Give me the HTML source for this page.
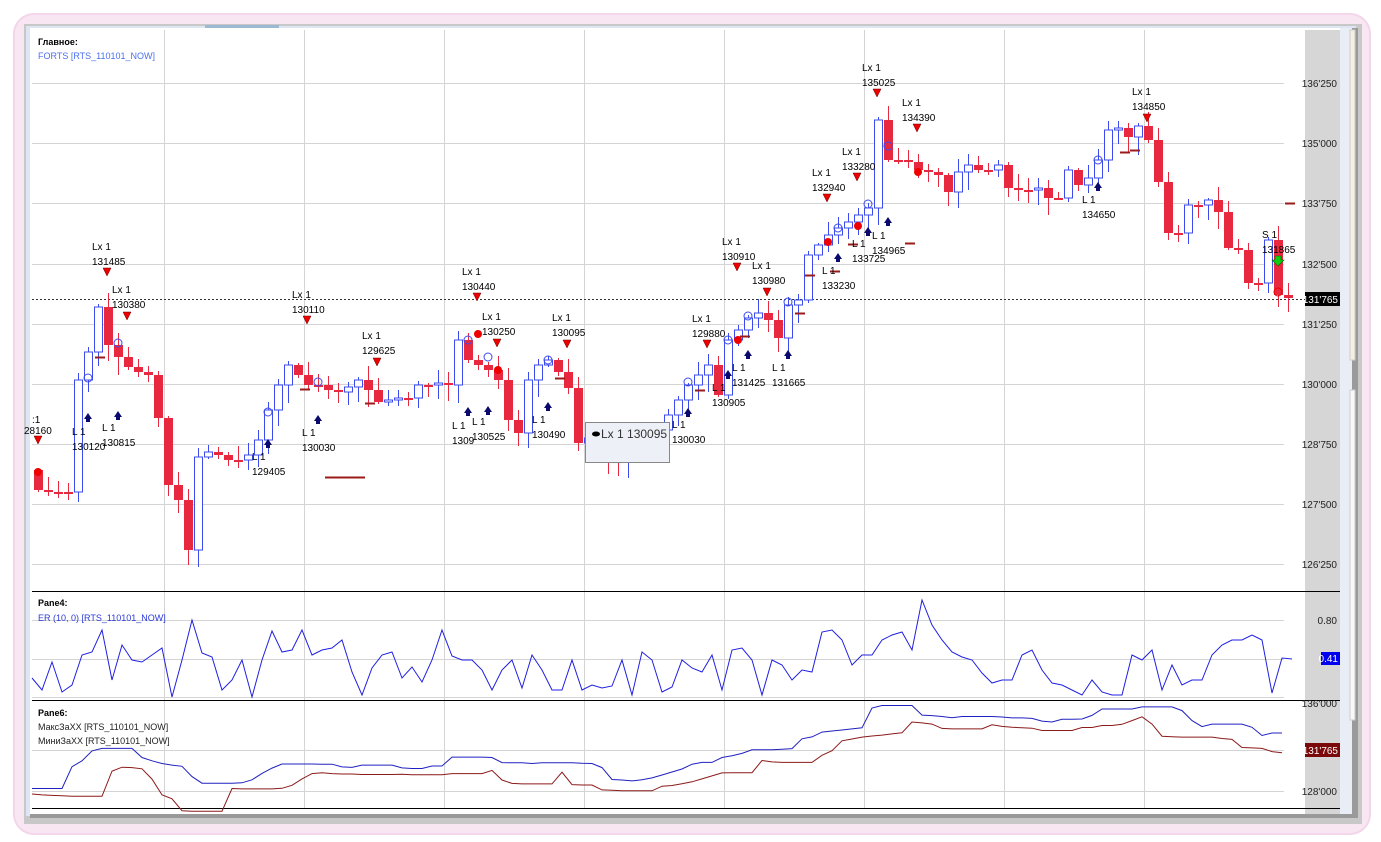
<!DOCTYPE html>
<html><head><meta charset="utf-8"><style>
html,body{margin:0;padding:0;width:1381px;height:842px;overflow:hidden;background:#fff}
svg text{font-family:"Liberation Sans","DejaVu Sans",sans-serif}
</style></head><body>
<svg id="s" width="1381" height="842" xmlns="http://www.w3.org/2000/svg">
<rect x="0" y="0" width="1381" height="842" fill="#fff"/>
<rect x="14" y="14" width="1356" height="820" rx="20" fill="#f9e6f3" stroke="#f3d6ea" stroke-width="2"/>
<rect x="24" y="24" width="1338" height="800" fill="#c8c8c8"/>
<rect x="26" y="26" width="1330" height="790" fill="#dde6f2"/>
<rect x="30" y="28" width="1310" height="786" fill="#fff"/>
<rect x="205" y="25" width="74" height="3" fill="#9fb8d2"/>
<rect x="1305" y="30" width="35" height="784" fill="#d6d6d6"/>
<rect x="1340" y="28" width="12" height="788" fill="#e9eef6"/>
<rect x="1352" y="28" width="6" height="790" fill="#9a9a9a"/>
<rect x="1350" y="30" width="5" height="330" fill="#f4f0e0" stroke="#ccc"/>
<rect x="1350" y="390" width="5" height="330" fill="#f8f8f8" stroke="#ccc"/>
<rect x="30" y="814" width="1326" height="4" fill="#999"/>
<g id="g"></g>
</svg>
<script>
(function(){
var S=document.getElementById('g'),h='';
function ln(x1,y1,x2,y2,c,w,extra){h+='<line x1="'+x1+'" y1="'+y1+'" x2="'+x2+'" y2="'+y2+'" stroke="'+c+'" stroke-width="'+(w||1)+'" '+(extra||'')+'/>';}
function tx(x,y,t,c,s,b,a){h+='<text x="'+x+'" y="'+y+'" font-size="'+(s||10)+'" fill="'+(c||'#000')+'"'+(b?' font-weight="bold"':'')+(a?' text-anchor="'+a+'"':'')+'>'+t+'</text>';}
var vx=[164,304,444,584,724,864,1004,1144];
vx.forEach(function(x){ln(x+.5,30,x+.5,808,'#d4d4d4');});
var py=[83,143,203,264,324,384,444,504,564],pl=["136'250","135'000","133'750","132'500","131'250","130'000","128'750","127'500","126'250"];
py.forEach(function(y,i){ln(32,y+.5,1284,y+.5,'#d4d4d4');tx(1337,y+4,pl[i],'#222',10,0,'end');});
ln(32,620.5,1284,620.5,'#d4d4d4');ln(32,659.5,1284,659.5,'#d4d4d4');ln(32,697.5,1284,697.5,'#d4d4d4');
ln(32,750.5,1284,750.5,'#d4d4d4');ln(32,791.5,1284,791.5,'#d4d4d4');
ln(32,591.5,1340,591.5,'#000');ln(32,700.5,1340,700.5,'#000');ln(32,808.5,1340,808.5,'#000');
ln(32,299.5,1305,299.5,'#333',1,'stroke-dasharray="2,2"');
tx(1337,624,"0.80",'#222',10,0,'end');
tx(1337,707,"136'000",'#222',10,0,'end');tx(1337,795,"128'000",'#222',10,0,'end');
var C=[490,492,492,492,380,352,307,345,357,367,372,375,418,485,500,550,457,452,455,460,460,455,440,410,385,365,375,385,385,390,392,387,380,390,402,400,398,398,385,385,383,385,340,360,365,370,380,420,433,380,365,360,372,388,443,438,440,460,460,455,450,440,430,415,400,385,375,365,395,340,330,318,313,320,338,305,300,255,245,235,228,222,215,208,120,160,160,162,170,172,175,192,172,165,170,170,165,188,190,190,188,198,198,170,185,178,160,130,128,137,126,140,182,233,233,205,205,200,212,248,250,283,283,240,295,298];
var o=470,mx=[],mn=[];
for(var i=0;i<C.length;i++){var x=38+i*10,c=C[i];var tp=Math.min(o,c),bt=Math.max(o,c);
var hi=tp-(i*37%13)-2,lo=bt+(i*53%17)+2;
var up=c<o,col=up?'#3b4bf0':'#e8283f';
ln(x+.5,hi,x+.5,lo,col);
if(up)h+='<rect x="'+(x-3.5)+'" y="'+tp+'" width="8" height="'+Math.max(bt-tp,1)+'" fill="#fff" stroke="'+col+'"/>';
else h+='<rect x="'+(x-4)+'" y="'+tp+'" width="9" height="'+Math.max(bt-tp,2)+'" fill="'+col+'"/>';
mx.push(hi);mn.push(lo);o=c;}
[[95,357],[300,389],[365,403],[325,477],[555,378],[695,390],[740,336],[795,313],[805,275],[830,271],[848,244],[905,243],[1120,152],[1130,150],[1285,203]].forEach(function(p){ln(p[0],p[1]+.5,p[0]+(p[0]==325?40:10),p[1]+.5,'#9b1b1b',2);});
[[38,472],[478,334],[498,370],[738,340],[828,242],[858,226],[918,172]].forEach(function(p){h+='<circle cx="'+p[0]+'" cy="'+p[1]+'" r="4" fill="#e00"/>';});
[[88,378],[118,343],[268,412],[318,382],[468,340],[488,357],[548,360],[688,382],[728,340],[748,316],[788,302],[838,228],[868,204],[888,146],[1098,160],[1278,292]].forEach(function(p,i){h+='<circle cx="'+p[0]+'" cy="'+p[1]+'" r="4" fill="none" stroke="'+(i==15?'#e00':'#3b4bf0')+'"/>';});
var L=[["Lx 1","131485",92,250,107,272,0],["Lx 1","130380",112,293,127,316,0],["L 1","130815",102,431,118,414,1],["L 1","130120",72,435,88,416,1],["Lx 1","130110",292,298,307,320,0],["L 1","130030",302,436,318,418,1],["L 1","129405",252,460,268,442,1],["Lx 1","129625",362,339,377,362,0],["Lx 1","130440",462,275,477,297,0],["Lx 1","130250",482,320,497,343,0],["L 1","1309",452,429,468,410,1],["L 1","130525",472,425,488,409,1],["L 1","130490",532,423,548,405,1],["Lx 1","130095",552,321,567,344,0],["L 1","130030",672,428,688,411,1],["Lx 1","129880",692,322,707,344,0],["L 1","130905",712,391,728,373,1],["L 1","131425",732,371,748,353,1],["L 1","131665",772,371,788,353,1],["Lx 1","130910",722,245,737,267,0],["Lx 1","130980",752,269,767,292,0],["Lx 1","132940",812,176,827,198,0],["L 1","133230",822,274,838,256,1],["Lx 1","133280",842,155,857,177,0],["L 1","133725",852,247,868,230,1],["L 1","134965",872,239,888,220,1],["Lx 1","135025",862,71,877,93,0],["Lx 1","134390",902,106,917,128,0],["Lx 1","134850",1132,95,1147,118,0],["L 1","134650",1082,203,1098,185,1],["","28160",24,419,38,440,0]];
L.forEach(function(a){tx(a[2],a[3],a[0]);tx(a[2],a[3]+15,a[1]);var x=a[4],y=a[5];
if(a[6])h+='<path d="M'+(x-4)+' '+(y+3)+'L'+x+' '+(y-3)+'L'+(x+4)+' '+(y+3)+'L'+(x+2)+' '+(y+3)+'L'+(x+2)+' '+(y+6)+'L'+(x-2)+' '+(y+6)+'L'+(x-2)+' '+(y+3)+'Z" fill="#0a0a6e"/>';
else h+='<path d="M'+(x-4)+' '+(y-4)+'L'+(x+4)+' '+(y-4)+'L'+x+' '+(y+4)+'Z" fill="#e00" stroke="#600" stroke-width=".5"/>';});
tx(32,423,":1");
tx(1262,238,"S 1");tx(1262,253,"131865");
h+='<path d="M1275 256h6v4h3l-6 6-6-6h3z" fill="#1c1" stroke="#060" stroke-width=".6"/>';
h+='<rect x="585.5" y="422.5" width="84" height="40" fill="#eef0f8" stroke="#888"/>';
h+='<ellipse cx="596" cy="434" rx="4" ry="2.5" fill="#000"/>';tx(601,438,"Lx 1 130095",'#333',12);
h+='<rect x="1305" y="292" width="35" height="14" fill="#000"/>';tx(1338,303,"131'765",'#fff',10,0,'end');
tx(38,45,"Главное:",'#000',9,1);tx(38,59,"FORTS [RTS_110101_NOW]",'#4a6ff0',9);
tx(38,606,"Pane4:",'#000',9,1);tx(38,621,"ER (10, 0) [RTS_110101_NOW]",'#2a3ad8',9);
tx(38,716,"Pane6:",'#000',9,1);tx(38,730,"МаксЗаXX [RTS_110101_NOW]",'#222',9);tx(38,744,"МиниЗаXX [RTS_110101_NOW]",'#222',9);
var E=[678,690,662,692,685,655,652,630,680,645,660,662,655,648,697,660,620,653,657,690,680,660,697,660,631,652,650,630,655,650,648,640,672,695,668,655,652,678,667,682,660,630,656,660,660,670,690,670,660,688,655,670,690,690,660,690,685,688,686,660,695,652,660,692,687,660,668,672,655,690,650,648,660,695,660,665,680,670,672,632,630,640,665,655,655,640,635,632,650,600,625,640,652,657,660,673,683,680,680,655,650,670,683,685,690,695,680,692,695,695,655,660,650,690,665,685,680,680,655,645,640,640,635,640,693,658,659];
var d='';E.forEach(function(y,i){d+=(i?'L':'M')+(32+i*10)+' '+y;});
h+='<path d="'+d+'" fill="none" stroke="#2020e0"/>';
h+='<rect x="1321" y="652" width="19" height="13" fill="#0000ee"/>';tx(1338,662,"0.41",'#fff',10,0,'end');
function m(y){return 703+((y-83)/0.048-250)/8000*88;}
var d1='',d2='';for(var i=0;i<C.length;i++){var a=Math.min.apply(null,mx.slice(Math.max(0,i-3),i+1)),b=Math.max.apply(null,mn.slice(Math.max(0,i-3),i+1));
d1+=(i?'L':'M')+(32+i*10)+' '+m(a).toFixed(1);d2+=(i?'L':'M')+(32+i*10)+' '+m(b).toFixed(1);}
h+='<path d="'+d1+'" fill="none" stroke="#2020c0"/><path d="'+d2+'" fill="none" stroke="#8b1a1a"/>';
h+='<rect x="1305" y="743" width="35" height="14" fill="#7a0a0a"/>';tx(1338,754,"131'765",'#fff',10,0,'end');
S.innerHTML=h;
})();
</script>
</body></html>
